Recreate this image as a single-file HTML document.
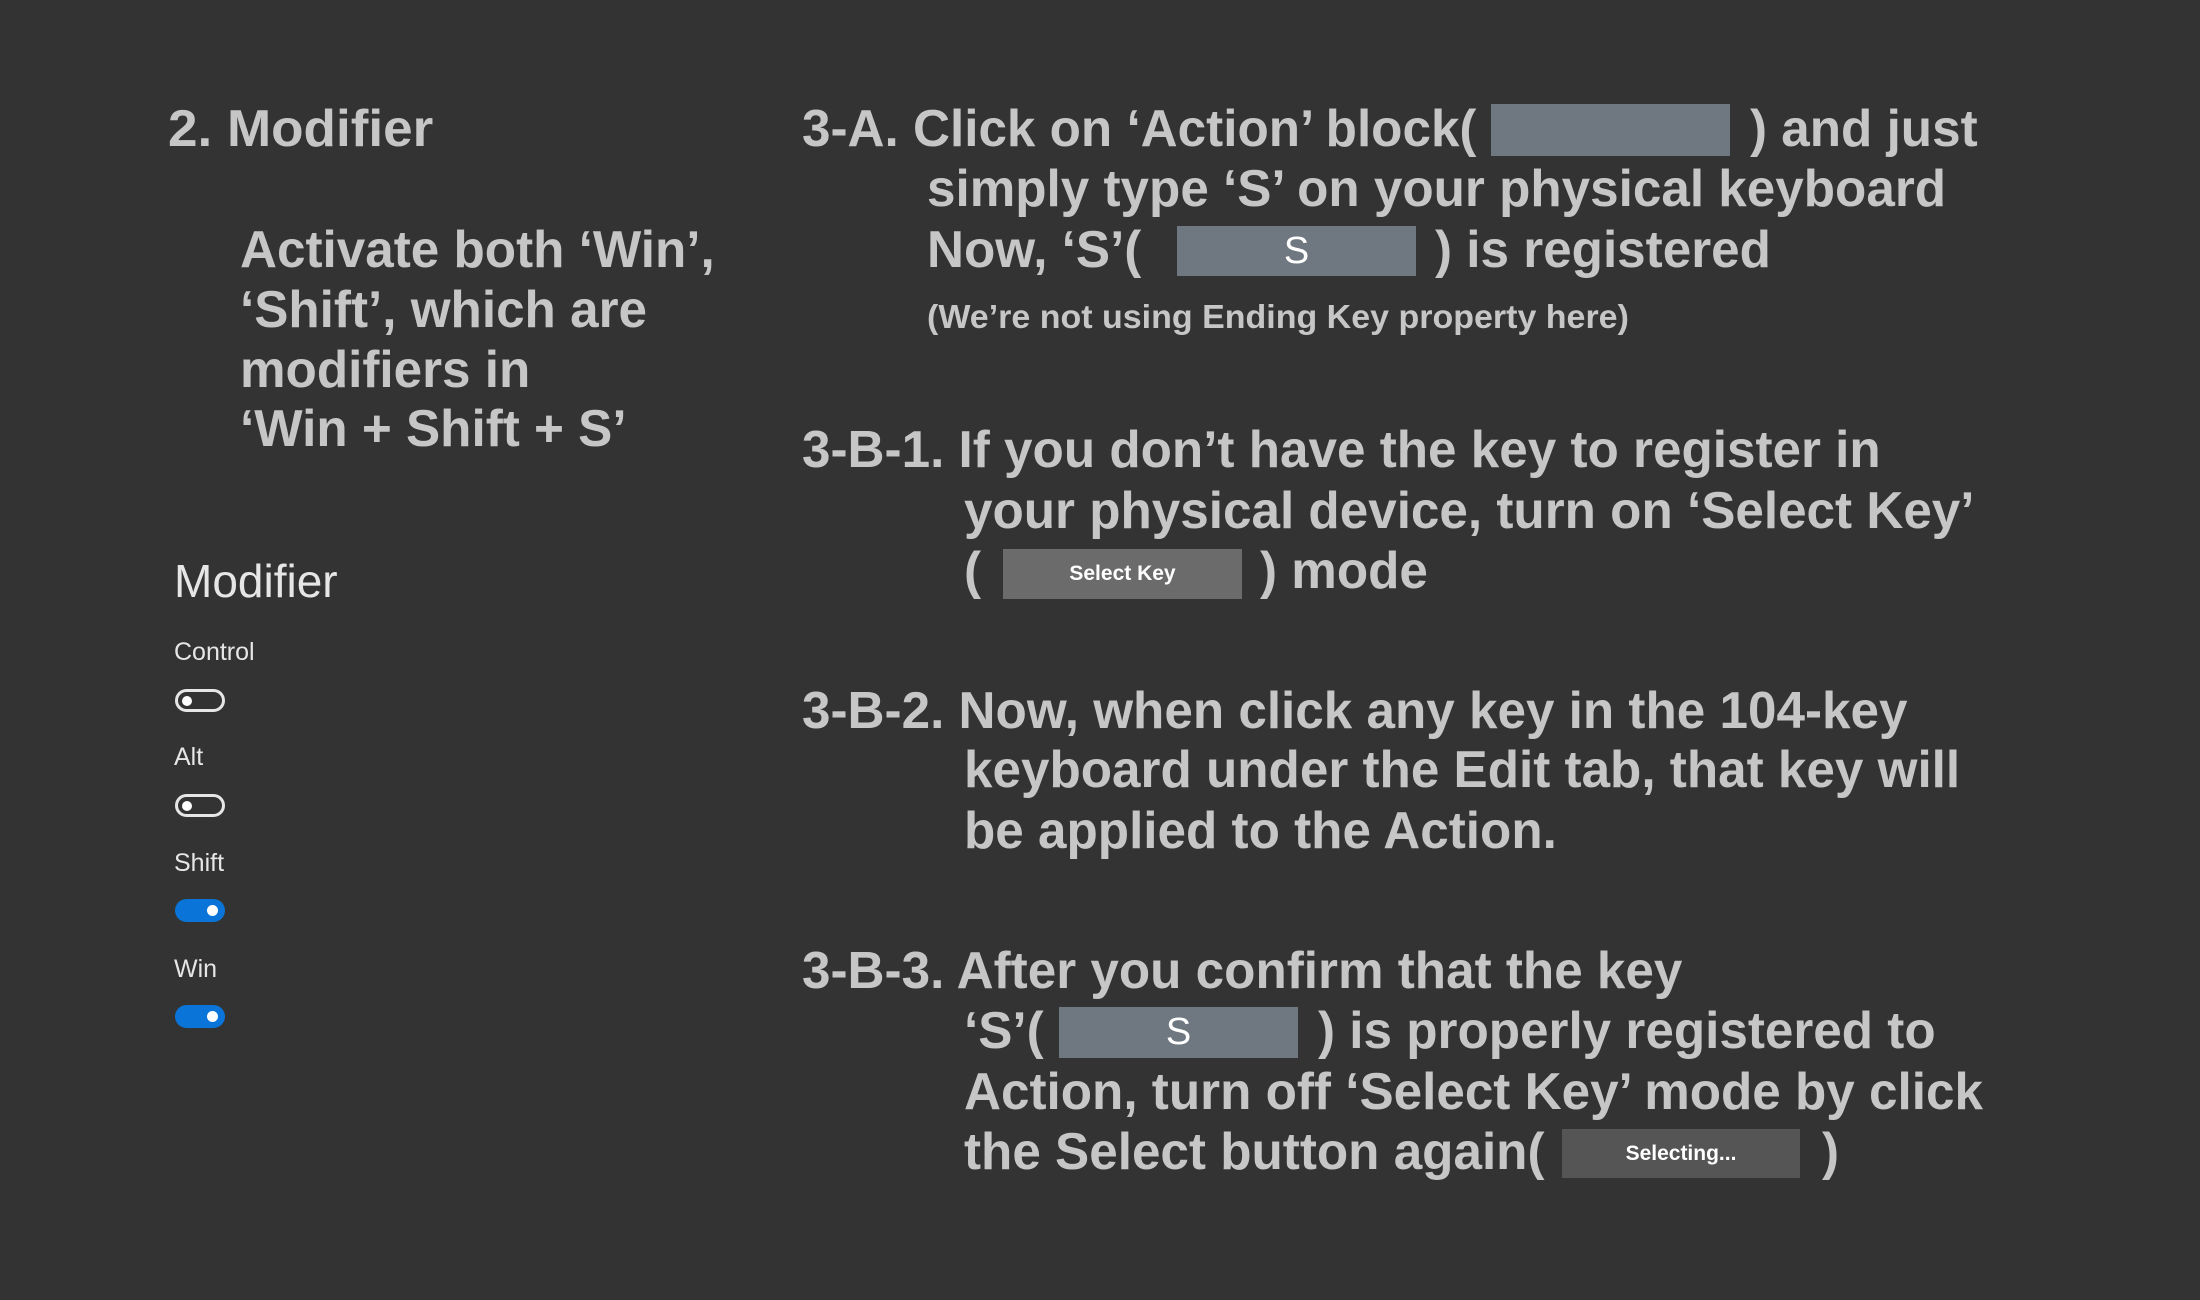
<!DOCTYPE html>
<html><head><meta charset="utf-8"><style>
body{margin:0;width:2200px;height:1300px;background:#333333;overflow:hidden;position:relative;font-family:"Liberation Sans",sans-serif;}
.t{position:absolute;white-space:nowrap;color:#c6c6c6;font-weight:bold;font-size:52px;line-height:52px;transform:scaleX(0.985);transform-origin:left center;}
.s{font-size:33px;line-height:33px;transform:scaleX(1.03);}
.b{position:absolute;background:#6f7880;color:#fff;text-align:center;font-size:38px;}
.g{position:absolute;background:#6b6b6b;color:#fff;text-align:center;font-weight:bold;font-size:21px;}
.l{position:absolute;color:#e6e6e6;white-space:nowrap;}
.tg{position:absolute;left:175px;width:50px;height:23px;border-radius:12px;box-sizing:border-box;}
.off{border:3px solid #e6e6e6;}
.off:after{content:"";position:absolute;left:4px;top:4px;width:10px;height:10px;border-radius:50%;background:#fff;}
.on{background:#0a74d8;}
.on:after{content:"";position:absolute;right:7px;top:6px;width:11px;height:11px;border-radius:50%;background:#fff;}
</style></head><body>
<div class="t" style="left:168px;top:103px;transform:scaleX(1.02)">2. Modifier</div>
<div class="t" style="left:240px;top:224px">Activate both ‘Win’,</div>
<div class="t" style="left:240px;top:284px">‘Shift’, which are</div>
<div class="t" style="left:240px;top:344px">modifiers in</div>
<div class="t" style="left:240px;top:403px">‘Win + Shift + S’</div>

<div class="l" style="left:174px;top:553px;font-size:46px;line-height:56px">Modifier</div>
<div class="l" style="left:174px;top:638px;font-size:25px">Control</div>
<div class="tg off" style="top:689px"></div>
<div class="l" style="left:174px;top:743px;font-size:25px">Alt</div>
<div class="tg off" style="top:794px"></div>
<div class="l" style="left:174px;top:849px;font-size:25px">Shift</div>
<div class="tg on" style="top:899px"></div>
<div class="l" style="left:174px;top:955px;font-size:25px">Win</div>
<div class="tg on" style="top:1005px"></div>

<div class="t" style="left:802px;top:103px">3-A. Click on ‘Action’ block(</div>
<div class="b" style="left:1491px;top:104px;width:239px;height:52px"></div>
<div class="t" style="left:1750px;top:103px">) and just</div>
<div class="t" style="left:927px;top:163px">simply type ‘S’ on your physical keyboard</div>
<div class="t" style="left:927px;top:224px">Now, ‘S’(</div>
<div class="b" style="left:1177px;top:226px;width:239px;height:50px;line-height:50px">S</div>
<div class="t" style="left:1435px;top:224px">) is registered</div>
<div class="t s" style="left:927px;top:300px">(We’re not using Ending Key property here)</div>

<div class="t" style="left:802px;top:424px">3-B-1. If you don’t have the key to register in</div>
<div class="t" style="left:964px;top:485px">your physical device, turn on ‘Select Key’</div>
<div class="t" style="left:964px;top:545px">(</div>
<div class="g" style="left:1003px;top:549px;width:239px;height:50px;line-height:50px">Select Key</div>
<div class="t" style="left:1260px;top:545px">) mode</div>

<div class="t" style="left:802px;top:685px">3-B-2. Now, when click any key in the 104-key</div>
<div class="t" style="left:964px;top:744px">keyboard under the Edit tab, that key will</div>
<div class="t" style="left:964px;top:805px">be applied to the Action.</div>

<div class="t" style="left:802px;top:945px">3-B-3. After you confirm that the key</div>
<div class="t" style="left:964px;top:1005px">‘S’(</div>
<div class="b" style="left:1059px;top:1007px;width:239px;height:51px;line-height:51px">S</div>
<div class="t" style="left:1318px;top:1005px">) is properly registered to</div>
<div class="t" style="left:964px;top:1066px">Action, turn off ‘Select Key’ mode by click</div>
<div class="t" style="left:964px;top:1126px">the Select button again(</div>
<div class="g" style="left:1562px;top:1129px;width:238px;height:49px;line-height:49px;background:#555">Selecting...</div>
<div class="t" style="left:1822px;top:1126px">)</div>
</body></html>
